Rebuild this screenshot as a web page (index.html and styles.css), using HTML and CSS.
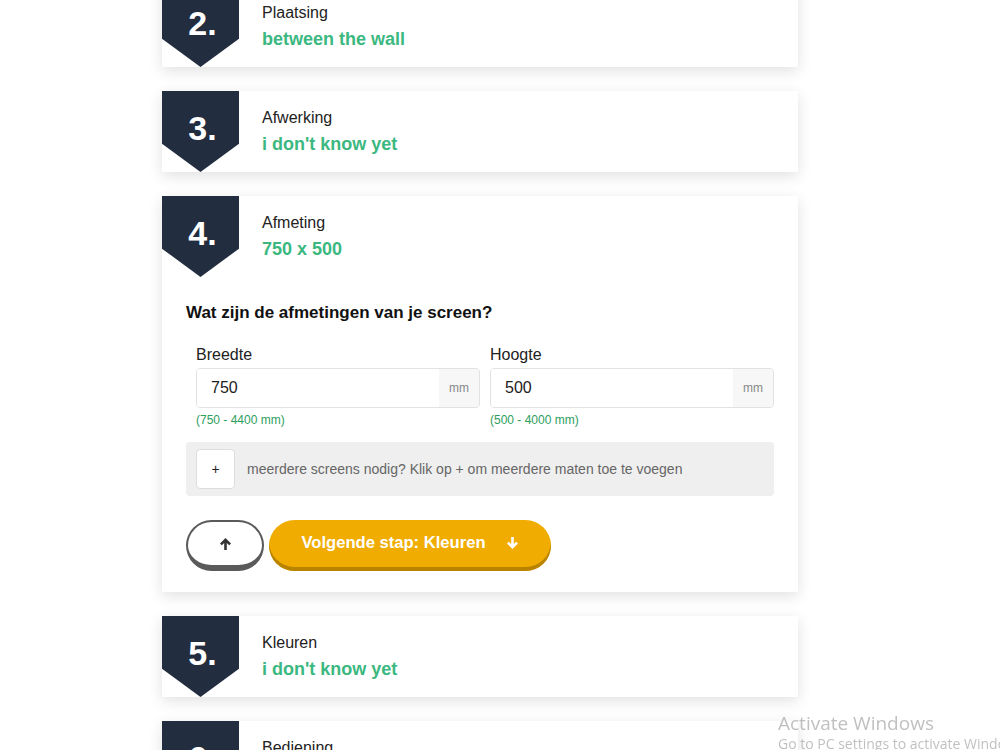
FILE: index.html
```html
<!DOCTYPE html>
<html lang="nl">
<head>
    <meta charset="UTF-8">
    <meta name="viewport" content="width=device-width, initial-scale=1.0">
    <title>Screen configurator</title>
    <link rel="stylesheet" href="styles.css">
</head>
<body>
    <div class="steps">
        <div class="step">
            <div class="step-head">
                <div class="badge">2.</div>
                <div class="step-info">
                    <div class="step-title">Plaatsing</div>
                    <div class="step-value">between the wall</div>
                </div>
            </div>
        </div>

        <div class="step">
            <div class="step-head">
                <div class="badge">3.</div>
                <div class="step-info">
                    <div class="step-title">Afwerking</div>
                    <div class="step-value">i don't know yet</div>
                </div>
            </div>
        </div>

        <div class="step">
            <div class="step-head">
                <div class="badge">4.</div>
                <div class="step-info">
                    <div class="step-title">Afmeting</div>
                    <div class="step-value">750 x 500</div>
                </div>
            </div>
            <div class="step-body">
                <h3 class="question">Wat zijn de afmetingen van je screen?</h3>
                <div class="size-row">
                    <div class="field">
                        <label for="breedte">Breedte</label>
                        <div class="input-group">
                            <input id="breedte" type="text" value="750">
                            <span class="addon">mm</span>
                        </div>
                        <div class="hint">(750 - 4400 mm)</div>
                    </div>
                    <div class="field">
                        <label for="hoogte">Hoogte</label>
                        <div class="input-group">
                            <input id="hoogte" type="text" value="500">
                            <span class="addon">mm</span>
                        </div>
                        <div class="hint">(500 - 4000 mm)</div>
                    </div>
                </div>
                <div class="more-box">
                    <button class="btn-plus">+</button>
                    <span>meerdere screens nodig? Klik op + om meerdere maten toe te voegen</span>
                </div>
                <div class="actions">
                    <button class="btn-back">
                        <svg width="13" height="14" viewBox="0 0 13 14"><path d="M6.5 1 L1 6.5 L2.8 8.3 L5.2 5.9 L5.2 13 L7.8 13 L7.8 5.9 L10.2 8.3 L12 6.5 Z" fill="#333"/></svg>
                    </button>
                    <button class="btn-next">
                        Volgende stap: Kleuren
                        <svg width="13" height="14" viewBox="0 0 13 14"><path d="M6.5 13 L1 7.5 L2.8 5.7 L5.2 8.1 L5.2 1 L7.8 1 L7.8 8.1 L10.2 5.7 L12 7.5 Z" fill="#fff"/></svg>
                    </button>
                </div>
            </div>
        </div>

        <div class="step">
            <div class="step-head">
                <div class="badge">5.</div>
                <div class="step-info">
                    <div class="step-title">Kleuren</div>
                    <div class="step-value">i don't know yet</div>
                </div>
            </div>
        </div>

        <div class="step">
            <div class="step-head">
                <div class="badge">6.</div>
                <div class="step-info">
                    <div class="step-title">Bediening</div>
                    <div class="step-value">i don't know yet</div>
                </div>
            </div>
        </div>
    </div>

    <div class="watermark">
        <div class="wm-title">Activate Windows</div>
        <div class="wm-sub">Go to PC settings to activate Windows.</div>
    </div>
</body>
</html>
```

FILE: styles.css
```css
/* Basis */
body {
    font-family: 'Liberation Sans', Arial, sans-serif;
    margin: 0;
    padding: 0;
    background-color: #ffffff;
    color: #222;
    height: 750px;
    overflow: hidden;
}

.steps {
    width: 636px;
    margin-left: 162px;
    margin-top: -14px;
    display: flex;
    flex-direction: column;
    gap: 24px;
}

.step {
    background-color: #fff;
    box-shadow: 0 4px 14px rgba(0, 0, 0, 0.12);
}

.step-head {
    display: flex;
    height: 81px;
}

.badge {
    width: 77px;
    height: 81px;
    background-color: #222d3f;
    color: #fff;
    font-size: 34px;
    font-weight: bold;
    text-align: center;
    line-height: 74px;
    padding-left: 4px;
    box-sizing: border-box;
    clip-path: polygon(0 0, 100% 0, 100% 65%, 50% 100%, 0 65%);
}

.step-info {
    padding: 17px 0 0 23px;
}

.step-title {
    font-size: 16px;
    line-height: 20px;
    color: #222;
}

.step-value {
    font-size: 18px;
    line-height: 26px;
    margin-top: 3px;
    font-weight: bold;
    color: #3bb87f;
}

/* Stap inhoud */
.step-body {
    padding: 26px 24px 21px 24px;
}

.question {
    font-size: 17px;
    line-height: 20px;
    font-weight: bold;
    color: #111;
    margin: 0 0 22px 0;
}

.size-row {
    display: grid;
    grid-template-columns: 1fr 1fr;
    gap: 10px;
    padding-left: 10px;
}

.field label {
    display: block;
    font-size: 16px;
    line-height: 20px;
    margin-bottom: 3px;
    color: #222;
}

.input-group {
    display: flex;
    height: 40px;
    border: 1px solid #e2e2e2;
    border-radius: 4px;
    box-sizing: border-box;
    overflow: hidden;
}

.input-group input {
    flex: 1;
    min-width: 0;
    border: none;
    outline: none;
    padding: 0 14px;
    font-family: inherit;
    font-size: 16px;
    color: #222;
}

.addon {
    width: 40px;
    background-color: #f7f7f7;
    color: #888;
    font-size: 12px;
    display: flex;
    align-items: center;
    justify-content: center;
}

.hint {
    font-size: 12px;
    line-height: 14px;
    margin-top: 5px;
    color: #2e9e5e;
}

.more-box {
    display: flex;
    align-items: center;
    gap: 12px;
    margin-top: 15px;
    height: 54px;
    padding: 0 10px;
    background-color: #efefef;
    border-radius: 4px;
    box-sizing: border-box;
    font-size: 14px;
    color: #666;
}

.btn-plus {
    width: 39px;
    height: 40px;
    background-color: #fff;
    border: 1px solid #ddd;
    border-radius: 4px;
    font-size: 14px;
    color: #222;
    cursor: pointer;
    padding: 0;
}

/* Knoppen */
.actions {
    display: flex;
    gap: 5px;
    margin-top: 24px;
}

.btn-back {
    width: 78px;
    height: 51px;
    background-color: #fff;
    border: 2px solid #5a5a5a;
    border-bottom-width: 6px;
    border-radius: 26px;
    cursor: pointer;
    display: flex;
    align-items: center;
    justify-content: center;
    padding: 0;
}

.btn-next {
    width: 282px;
    height: 51px;
    background-color: #f0ac00;
    border: none;
    border-radius: 26px;
    box-shadow: inset 0 -4px 0 #b88400;
    color: #fff;
    font-family: inherit;
    font-size: 16.6px;
    font-weight: bold;
    cursor: pointer;
    display: flex;
    align-items: center;
    justify-content: center;
    gap: 20px;
    padding: 0 0 5px 0;
}

/* Windows melding */
.watermark {
    position: fixed;
    left: 778px;
    top: 711px;
    font-family: 'Open Sans', 'Noto Sans', sans-serif;
    color: rgba(150, 150, 150, 0.6);
    white-space: nowrap;
}

.wm-title {
    font-size: 19px;
    line-height: 24px;
}

.wm-sub {
    font-size: 14px;
    line-height: 18px;
}
```
